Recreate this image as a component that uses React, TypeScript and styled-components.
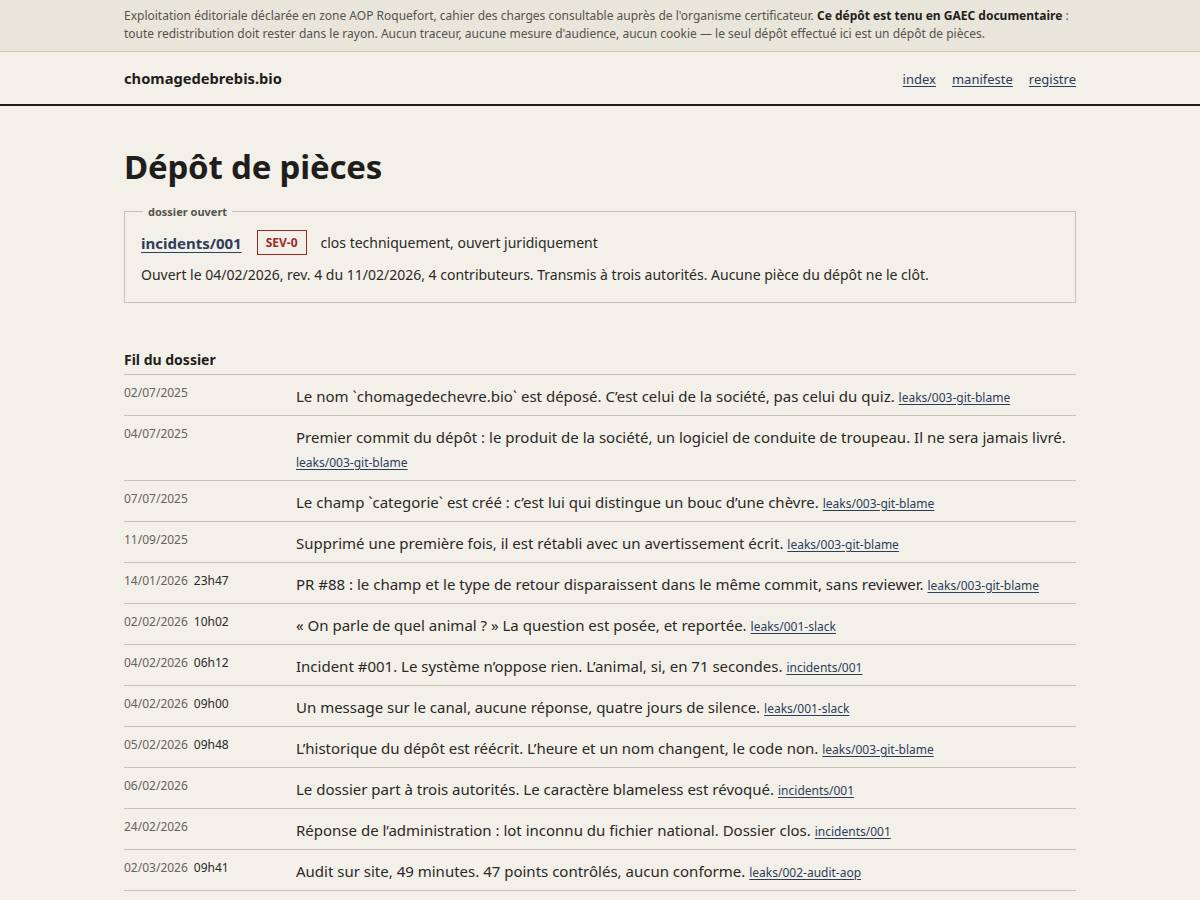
import styled, { createGlobalStyle } from "styled-components";

const GlobalStyle = createGlobalStyle`
  html, body {
    margin: 0;
    padding: 0;
    background: #f3f0e9;
    color: #1f1e1b;
    font-family: "Noto Sans", "Open Sans", sans-serif;
  }
`;

type Entry = {
  date: string;
  time?: string;
  text: string;
  ref: string;
};

const entries: Entry[] = [
  {
    date: "02/07/2025",
    text: "Le nom `chomagedechevre.bio` est déposé. C’est celui de la société, pas celui du quiz.",
    ref: "leaks/003-git-blame",
  },
  {
    date: "04/07/2025",
    text: "Premier commit du dépôt : le produit de la société, un logiciel de conduite de troupeau. Il ne sera jamais livré.",
    ref: "leaks/003-git-blame",
  },
  {
    date: "07/07/2025",
    text: "Le champ `categorie` est créé : c’est lui qui distingue un bouc d’une chèvre.",
    ref: "leaks/003-git-blame",
  },
  {
    date: "11/09/2025",
    text: "Supprimé une première fois, il est rétabli avec un avertissement écrit.",
    ref: "leaks/003-git-blame",
  },
  {
    date: "14/01/2026",
    time: "23h47",
    text: "PR #88 : le champ et le type de retour disparaissent dans le même commit, sans reviewer.",
    ref: "leaks/003-git-blame",
  },
  {
    date: "02/02/2026",
    time: "10h02",
    text: "« On parle de quel animal ? » La question est posée, et reportée.",
    ref: "leaks/001-slack",
  },
  {
    date: "04/02/2026",
    time: "06h12",
    text: "Incident #001. Le système n’oppose rien. L’animal, si, en 71 secondes.",
    ref: "incidents/001",
  },
  {
    date: "04/02/2026",
    time: "09h00",
    text: "Un message sur le canal, aucune réponse, quatre jours de silence.",
    ref: "leaks/001-slack",
  },
  {
    date: "05/02/2026",
    time: "09h48",
    text: "L’historique du dépôt est réécrit. L’heure et un nom changent, le code non.",
    ref: "leaks/003-git-blame",
  },
  {
    date: "06/02/2026",
    text: "Le dossier part à trois autorités. Le caractère blameless est révoqué.",
    ref: "incidents/001",
  },
  {
    date: "24/02/2026",
    text: "Réponse de l’administration : lot inconnu du fichier national. Dossier clos.",
    ref: "incidents/001",
  },
  {
    date: "02/03/2026",
    time: "09h41",
    text: "Audit sur site, 49 minutes. 47 points contrôlés, aucun conforme.",
    ref: "leaks/002-audit-aop",
  },
];

const App = () => {
  return (
    <>
      <GlobalStyle />
      <Notice>
        <Wrap>
          <NoticeText>
            Exploitation éditoriale déclarée en zone AOP Roquefort, cahier des charges consultable
            auprès de l'organisme certificateur. <strong>Ce dépôt est tenu en GAEC documentaire</strong>{" "}
            : toute redistribution doit rester dans le rayon. Aucun traceur, aucune mesure d'audience,
            aucun cookie — le seul dépôt effectué ici est un dépôt de pièces.
          </NoticeText>
        </Wrap>
      </Notice>

      <Header>
        <HeaderInner>
          <SiteName>chomagedebrebis.bio</SiteName>
          <Nav>
            <NavLink href="#">index</NavLink>
            <NavLink href="#">manifeste</NavLink>
            <NavLink href="#">registre</NavLink>
          </Nav>
        </HeaderInner>
      </Header>

      <Main>
        <Title>Dépôt de pièces</Title>

        <Dossier>
          <Legend>dossier ouvert</Legend>
          <DossierHead>
            <DossierLink href="#">incidents/001</DossierLink>
            <Severity>SEV-0</Severity>
            <Status>clos techniquement, ouvert juridiquement</Status>
          </DossierHead>
          <DossierMeta>
            Ouvert le 04/02/2026, rev. 4 du 11/02/2026, 4 contributeurs. Transmis à trois autorités.
            Aucune pièce du dépôt ne le clôt.
          </DossierMeta>
        </Dossier>

        <SectionTitle>Fil du dossier</SectionTitle>
        <Timeline>
          {entries.map((entry, i) => (
            <Row key={i}>
              <When>
                <DateText>{entry.date}</DateText>
                {entry.time && <TimeText>{entry.time}</TimeText>}
              </When>
              <What>
                {entry.text} <RefLink href="#">{entry.ref}</RefLink>
              </What>
            </Row>
          ))}
        </Timeline>
      </Main>
    </>
  );
};

export default App;

const Wrap = styled.div`
  width: 952px;
  margin: 0 auto;
`;

const Notice = styled.div`
  background: #e8e5da;
  border-bottom: 1px solid #cdc9bd;
  padding: 7px 0 8px;
`;

const NoticeText = styled.p`
  margin: 0;
  font-size: 12px;
  line-height: 18px;
  color: #55534d;

  strong {
    color: #1f1e1b;
    font-weight: 700;
  }
`;

const Header = styled.header`
  border-bottom: 2px solid #1f1e1b;
`;

const HeaderInner = styled(Wrap)`
  height: 52px;
  display: flex;
  align-items: center;
  justify-content: space-between;
`;

const SiteName = styled.div`
  font-size: 14.7px;
  font-weight: 700;
  color: #1f1e1b;
`;

const Nav = styled.nav`
  display: flex;
  gap: 16px;
  padding-top: 2px;
`;

const NavLink = styled.a`
  font-size: 13px;
  color: #2c3e5a;
  text-decoration: underline;
  text-underline-offset: 2px;
`;

const Main = styled(Wrap)`
  padding: 39px 0 40px;
`;

const Title = styled.h1`
  margin: 0 0 15px;
  font-size: 33px;
  line-height: 44px;
  font-weight: 700;
  color: #1f1e1b;
  letter-spacing: -0.2px;
`;

const Dossier = styled.fieldset`
  margin: 0;
  border: 1px solid #c6c2b7;
  padding: 11px 16px 17px;
`;

const Legend = styled.legend`
  padding: 0 5px;
  margin-left: 2px;
  font-size: 11px;
  font-weight: 700;
  color: #55534d;
`;

const DossierHead = styled.div`
  display: flex;
  align-items: center;
  gap: 15px;
  margin-bottom: 10px;
`;

const DossierLink = styled.a`
  font-size: 15px;
  font-weight: 700;
  color: #2c3e5a;
  text-decoration: underline;
  text-underline-offset: 3px;
`;

const Severity = styled.span`
  border: 1px solid #9c2a22;
  color: #9c2a22;
  font-size: 12px;
  font-weight: 700;
  padding: 3px 8px;
  line-height: 17px;
  margin-right: -1px;
`;

const Status = styled.span`
  font-size: 14px;
  color: #2a2925;
`;

const DossierMeta = styled.p`
  margin: 0;
  font-size: 14px;
  line-height: 20px;
  color: #2a2925;
`;

const SectionTitle = styled.h2`
  margin: 47px 0 4px;
  font-size: 14px;
  line-height: 20px;
  font-weight: 700;
  color: #1f1e1b;
`;

const Timeline = styled.div`
  border-top: 1px solid #c6c2b7;
`;

const Row = styled.div`
  display: grid;
  grid-template-columns: 172px 1fr;
  border-bottom: 1px solid #c6c2b7;
  padding: 9px 0 7px;
`;

const When = styled.div`
  display: flex;
  gap: 6px;
  font-size: 12px;
  line-height: 18px;
`;

const DateText = styled.span`
  color: #66635c;
`;

const TimeText = styled.span`
  color: #2a2925;
`;

const What = styled.div`
  font-size: 15px;
  line-height: 24px;
  color: #2a2925;
`;

const RefLink = styled.a`
  font-size: 12px;
  line-height: 1;
  color: #2c3e5a;
  text-decoration: underline;
  text-underline-offset: 2px;
`;
